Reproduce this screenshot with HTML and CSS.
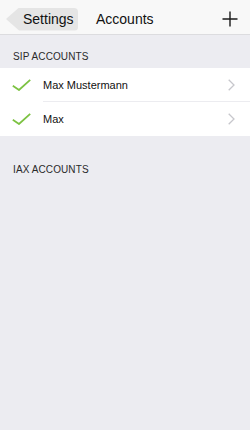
FILE: index.html
```html
<!DOCTYPE html>
<html>
<head>
<meta charset="utf-8">
<link rel="stylesheet" href="styles.css">
</head>
<body>
<div class="nav">
  <div class="back"><span class="back-label">Settings</span></div>
  <div class="title">Accounts</div>
  <svg class="plus" width="16" height="16" viewBox="0 0 16 16"><path d="M8 0.5V15.5M0.5 8H15.5" stroke="#1a1a1a" stroke-width="1.4" fill="none"/></svg>
</div>
<div class="section-header first">SIP ACCOUNTS</div>
<div class="group">
  <div class="row">
    <svg class="check" width="19" height="12" viewBox="0 0 19 12"><path d="M0.8 6.8L7 11L18.2 0.8" stroke="#7cc242" stroke-width="1.8" fill="none"/></svg>
    <div class="row-body">
      <span class="label">Max Mustermann</span>
      <svg class="chev" width="7" height="12" viewBox="0 0 7 12"><path d="M0.7 0.7L6 6L0.7 11.3" stroke="#c7c7cc" stroke-width="1.3" fill="none"/></svg>
    </div>
  </div>
  <div class="row">
    <svg class="check" width="19" height="12" viewBox="0 0 19 12"><path d="M0.8 6.8L7 11L18.2 0.8" stroke="#7cc242" stroke-width="1.8" fill="none"/></svg>
    <div class="row-body last">
      <span class="label">Max</span>
      <svg class="chev" width="7" height="12" viewBox="0 0 7 12"><path d="M0.7 0.7L6 6L0.7 11.3" stroke="#c7c7cc" stroke-width="1.3" fill="none"/></svg>
    </div>
  </div>
</div>
<div class="section-header second">IAX ACCOUNTS</div>
</body>
</html>
```
FILE: styles.css
```css
html, body {
  margin: 0;
  padding: 0;
}
body {
  background: #ececf1;
  font-family: "Liberation Sans", Arial, sans-serif;
  color: #111;
  width: 250px;
  height: 430px;
}
.nav {
  height: 35px;
  padding-top: 4px;
  background: #f8f8f8;
  border-bottom: 1px solid #dcdcdf;
  display: flex;
  align-items: center;
  box-sizing: border-box;
}
.back {
  margin-left: 6px;
  height: 23px;
  width: 72px;
  background: #e5e5e5;
  border-radius: 0 4px 4px 0;
  clip-path: polygon(0 50%, 13px 0, 100% 0, 100% 100%, 13px 100%);
  display: flex;
  align-items: center;
  box-sizing: border-box;
  padding-left: 17px;
}
.back-label {
  font-size: 14px;
  color: #111;
}
.title {
  margin-left: 18px;
  font-size: 14px;
  color: #111;
}
.plus {
  margin-left: auto;
  margin-right: 12px;
}
.section-header {
  font-size: 10px;
  line-height: 12px;
  color: #2a2a2a;
  padding-left: 13px;
  letter-spacing: 0.1px;
}
.section-header.first {
  padding-top: 16px;
  padding-bottom: 5px;
}
.section-header.second {
  padding-top: 28px;
}
.group {
  background: #fff;
}
.row {
  display: flex;
  align-items: center;
  height: 34px;
}
.check {
  margin-left: 12px;
  margin-right: 12px;
  flex: none;
}
.row-body {
  flex: 1;
  height: 100%;
  display: flex;
  align-items: center;
  border-bottom: 1px solid #ececf0;
  box-sizing: border-box;
}
.row-body.last {
  border-bottom: none;
}
.label {
  font-size: 11px;
  color: #111;
}
.chev {
  margin-left: auto;
  margin-right: 15px;
}
```
